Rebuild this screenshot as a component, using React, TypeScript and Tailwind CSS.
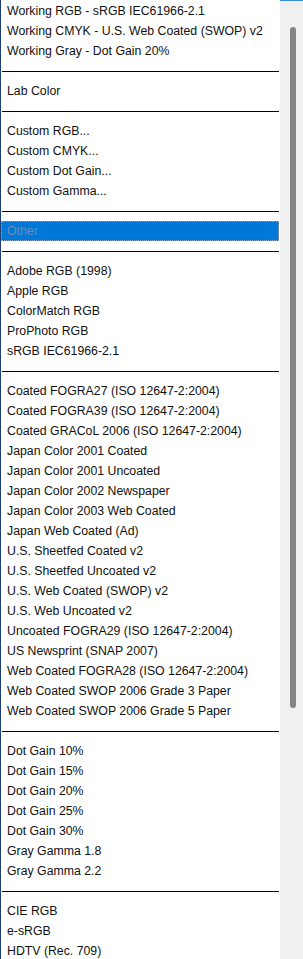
import React from "react";

type Row = { label?: string; sep?: boolean; selected?: boolean };

const groups: string[][] = [
  ["Working RGB - sRGB IEC61966-2.1", "Working CMYK - U.S. Web Coated (SWOP) v2", "Working Gray - Dot Gain 20%"],
  ["Lab Color"],
  ["Custom RGB...", "Custom CMYK...", "Custom Dot Gain...", "Custom Gamma..."],
  ["Other"],
  ["Adobe RGB (1998)", "Apple RGB", "ColorMatch RGB", "ProPhoto RGB", "sRGB IEC61966-2.1"],
  [
    "Coated FOGRA27 (ISO 12647-2:2004)",
    "Coated FOGRA39 (ISO 12647-2:2004)",
    "Coated GRACoL 2006 (ISO 12647-2:2004)",
    "Japan Color 2001 Coated",
    "Japan Color 2001 Uncoated",
    "Japan Color 2002 Newspaper",
    "Japan Color 2003 Web Coated",
    "Japan Web Coated (Ad)",
    "U.S. Sheetfed Coated v2",
    "U.S. Sheetfed Uncoated v2",
    "U.S. Web Coated (SWOP) v2",
    "U.S. Web Uncoated v2",
    "Uncoated FOGRA29 (ISO 12647-2:2004)",
    "US Newsprint (SNAP 2007)",
    "Web Coated FOGRA28 (ISO 12647-2:2004)",
    "Web Coated SWOP 2006 Grade 3 Paper",
    "Web Coated SWOP 2006 Grade 5 Paper",
  ],
  ["Dot Gain 10%", "Dot Gain 15%", "Dot Gain 20%", "Dot Gain 25%", "Dot Gain 30%", "Gray Gamma 1.8", "Gray Gamma 2.2"],
  ["CIE RGB", "e-sRGB", "HDTV (Rec. 709)"],
];

const rows: Row[] = [];
groups.forEach((g, i) => {
  if (i > 0) rows.push({ sep: true });
  g.forEach((label) => rows.push({ label, selected: label === "Other" }));
});

export default function App() {
  return (
    <div
      className="flex h-[959px] w-[303px] overflow-hidden bg-white text-[12.3px] text-[#111]"
      style={{ fontFamily: '"Liberation Sans", Arial, sans-serif' }}
    >
      <div className="flex w-[280px] flex-col border-l border-[#1d3f73]">
        {rows.map((r, i) =>
          r.sep ? (
            <div key={i} className="h-[20px] shrink-0 pt-[11px] pr-[1px] pl-[1px]">
              <div className="h-px w-full bg-black" />
            </div>
          ) : r.selected ? (
            <div key={i} className="h-[20px] shrink-0 pr-[1px]">
              <div className="mt-[1px] flex h-[20px] w-full items-center border border-dotted border-[#8aa8c8] bg-[#0078d7] pt-[1px] pl-[5px] text-[#6b8db3]">
                {r.label}
              </div>
            </div>
          ) : (
            <div key={i} className="flex h-[20px] shrink-0 items-center pt-[2px] pl-[6px] whitespace-nowrap">
              {r.label}
            </div>
          )
        )}
      </div>
      <div className="flex w-[23px] flex-col border-t border-[#3b8fd9] bg-[#f0f0f0] pt-[26px] pl-[10px]">
        <div className="h-[681px] w-[6px] rounded-full bg-[#858585]" />
      </div>
    </div>
  );
}
